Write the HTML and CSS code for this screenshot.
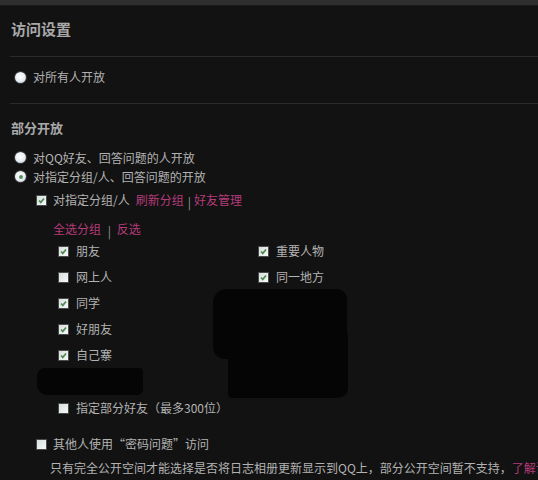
FILE: index.html
```html
<!DOCTYPE html>
<html lang="zh-CN">
<head>
    <meta charset="UTF-8" />
    <title>访问设置</title>
    <link rel="stylesheet" href="styles.css">
</head>
<body>
    <div class="topbar"></div>
    <div class="page">
        <h2 class="title">访问设置</h2>

        <div class="section first">
            <div class="opt"><span class="radio"></span>对所有人开放</div>
        </div>

        <div class="section second">
            <h3 class="sub">部分开放</h3>
            <div class="opt radio-row"><span class="radio"></span>对QQ好友、回答问题的人开放</div>
            <div class="opt radio-row"><span class="radio on"></span>对指定分组/人、回答问题的开放</div>

            <div class="opt level1 group-head">
                <span class="cb on"><svg viewBox="0 0 11 11"><path d="M2.5 5.5 L4.6 7.8 L8.6 3" /></svg></span>
                对指定分组/人
                <a href="#" class="link refresh">刷新分组</a>
                <span class="sep">|</span><a href="#" class="link">好友管理</a>
            </div>

            <div class="select-links">
                <a href="#" class="link">全选分组</a>
                <span class="sep">|</span>
                <a href="#" class="link">反选</a>
            </div>

            <div class="groups">
                <div class="opt"><span class="cb on"><svg viewBox="0 0 11 11"><path d="M2.5 5.5 L4.6 7.8 L8.6 3" /></svg></span>朋友</div>
                <div class="opt"><span class="cb on"><svg viewBox="0 0 11 11"><path d="M2.5 5.5 L4.6 7.8 L8.6 3" /></svg></span>重要人物</div>
                <div class="opt"><span class="cb"></span>网上人</div>
                <div class="opt"><span class="cb on"><svg viewBox="0 0 11 11"><path d="M2.5 5.5 L4.6 7.8 L8.6 3" /></svg></span>同一地方</div>
                <div class="opt"><span class="cb on"><svg viewBox="0 0 11 11"><path d="M2.5 5.5 L4.6 7.8 L8.6 3" /></svg></span>同学</div>
                <div class="opt"></div>
                <div class="opt"><span class="cb on"><svg viewBox="0 0 11 11"><path d="M2.5 5.5 L4.6 7.8 L8.6 3" /></svg></span>好朋友</div>
                <div class="opt"></div>
                <div class="opt"><span class="cb on"><svg viewBox="0 0 11 11"><path d="M2.5 5.5 L4.6 7.8 L8.6 3" /></svg></span>自己寨</div>
            </div>

            <div class="opt level2 some-friends"><span class="cb"></span>指定部分好友（最多300位）</div>

            <div class="opt level1 password"><span class="cb"></span>其他人使用“密码问题”访问</div>

            <p class="note">只有完全公开空间才能选择是否将日志相册更新显示到QQ上，部分公开空间暂不支持，<a href="#" class="link">了解详情</a></p>
        </div>

        <!-- 涂黑的部分 -->
        <div class="blot blot-big"></div>
        <div class="blot blot-big2"></div>
        <div class="blot blot-small"></div>
    </div>
</body>
</html>
```

FILE: styles.css
```css
body {
    margin: 0;
    background-color: #121212;
    font-family: "Noto Sans CJK SC", "DejaVu Sans", sans-serif;
    font-size: 12px;
    color: #b2b2b2;
    overflow: hidden;
}

.topbar {
    height: 5px;
    background-color: #2e2e2e;
    border-bottom: 1px solid #1a1a1a;
}

.page {
    position: relative;
    padding-left: 10px;
    white-space: nowrap;
}

.title {
    margin: 0;
    padding: 13px 0 17px 1px;
    line-height: 20px;
    font-size: 15px;
    font-weight: bold;
    color: #a9a9a9;
    border-bottom: 1px solid #2b2b2b;
}

.section.first {
    padding: 10px 0 16px;
    border-bottom: 1px solid #2b2b2b;
}

.sub {
    margin: 0 0 10px;
    padding: 14px 0 0 1px;
    line-height: 20px;
    font-size: 13px;
    font-weight: bold;
    color: #a9a9a9;
}

.opt {
    display: flex;
    align-items: center;
    height: 20px;
    line-height: 20px;
    padding-left: 5px;
}

.radio-row {
    height: 19px;
}

.radio {
    width: 11px;
    height: 11px;
    border-radius: 50%;
    margin-right: 7px;
    background: radial-gradient(circle at 45% 40%, #ffffff 0%, #e8eef2 55%, #a9b3ba 100%);
    box-shadow: 0 0 0 1px #3a3a3a;
    display: inline-flex;
    align-items: center;
    justify-content: center;
}

.radio.on::after {
    content: "";
    width: 4px;
    height: 4px;
    border-radius: 50%;
    background-color: #5d8f5d;
}

.cb {
    width: 11px;
    height: 11px;
    box-sizing: border-box;
    border: 1px solid #4a4a4a;
    background: linear-gradient(135deg, #d8dede 0%, #f4f8f8 100%);
    margin-right: 7px;
    display: inline-block;
    flex-shrink: 0;
}

.cb svg {
    display: block;
    width: 9px;
    height: 9px;
}

.cb path {
    fill: none;
    stroke: #4f8a4f;
    stroke-width: 2;
}

.level1 {
    padding-left: 26px;
}

.level1 .cb {
    margin-right: 6px;
}

.group-head {
    margin-top: 4px;
}

.link {
    color: #b43b7a;
    text-decoration: none;
}

.refresh {
    margin-left: 6px;
}

.sep {
    color: #9a9a9a;
    margin: 0 3px 0 4px;
    position: relative;
    top: 2px;
}

.select-links {
    margin-top: 9px;
    padding-left: 43px;
    height: 19px;
    line-height: 19px;
}

.groups {
    display: grid;
    grid-template-columns: 200px 200px;
    grid-auto-rows: 26px;
    padding-left: 43px;
}

.groups .opt {
    height: 26px;
}

.level2 {
    padding-left: 48px;
}

.some-friends {
    margin-top: 30px;
}

.password {
    margin-top: 16px;
}

.note {
    margin: 4px 0 0 40px;
    height: 20px;
    line-height: 20px;
}

.blot {
    position: absolute;
    background-color: #050505;
}

.blot-big {
    left: 213px;
    top: 283px;
    width: 134px;
    height: 70px;
    border-radius: 14px 10px 6px 12px;
}

.blot-big2 {
    left: 228px;
    top: 320px;
    width: 120px;
    height: 72px;
    border-radius: 4px 10px 10px 4px;
}

.blot-small {
    left: 37px;
    top: 362px;
    width: 106px;
    height: 27px;
    border-radius: 8px 4px 6px 10px;
}
```
